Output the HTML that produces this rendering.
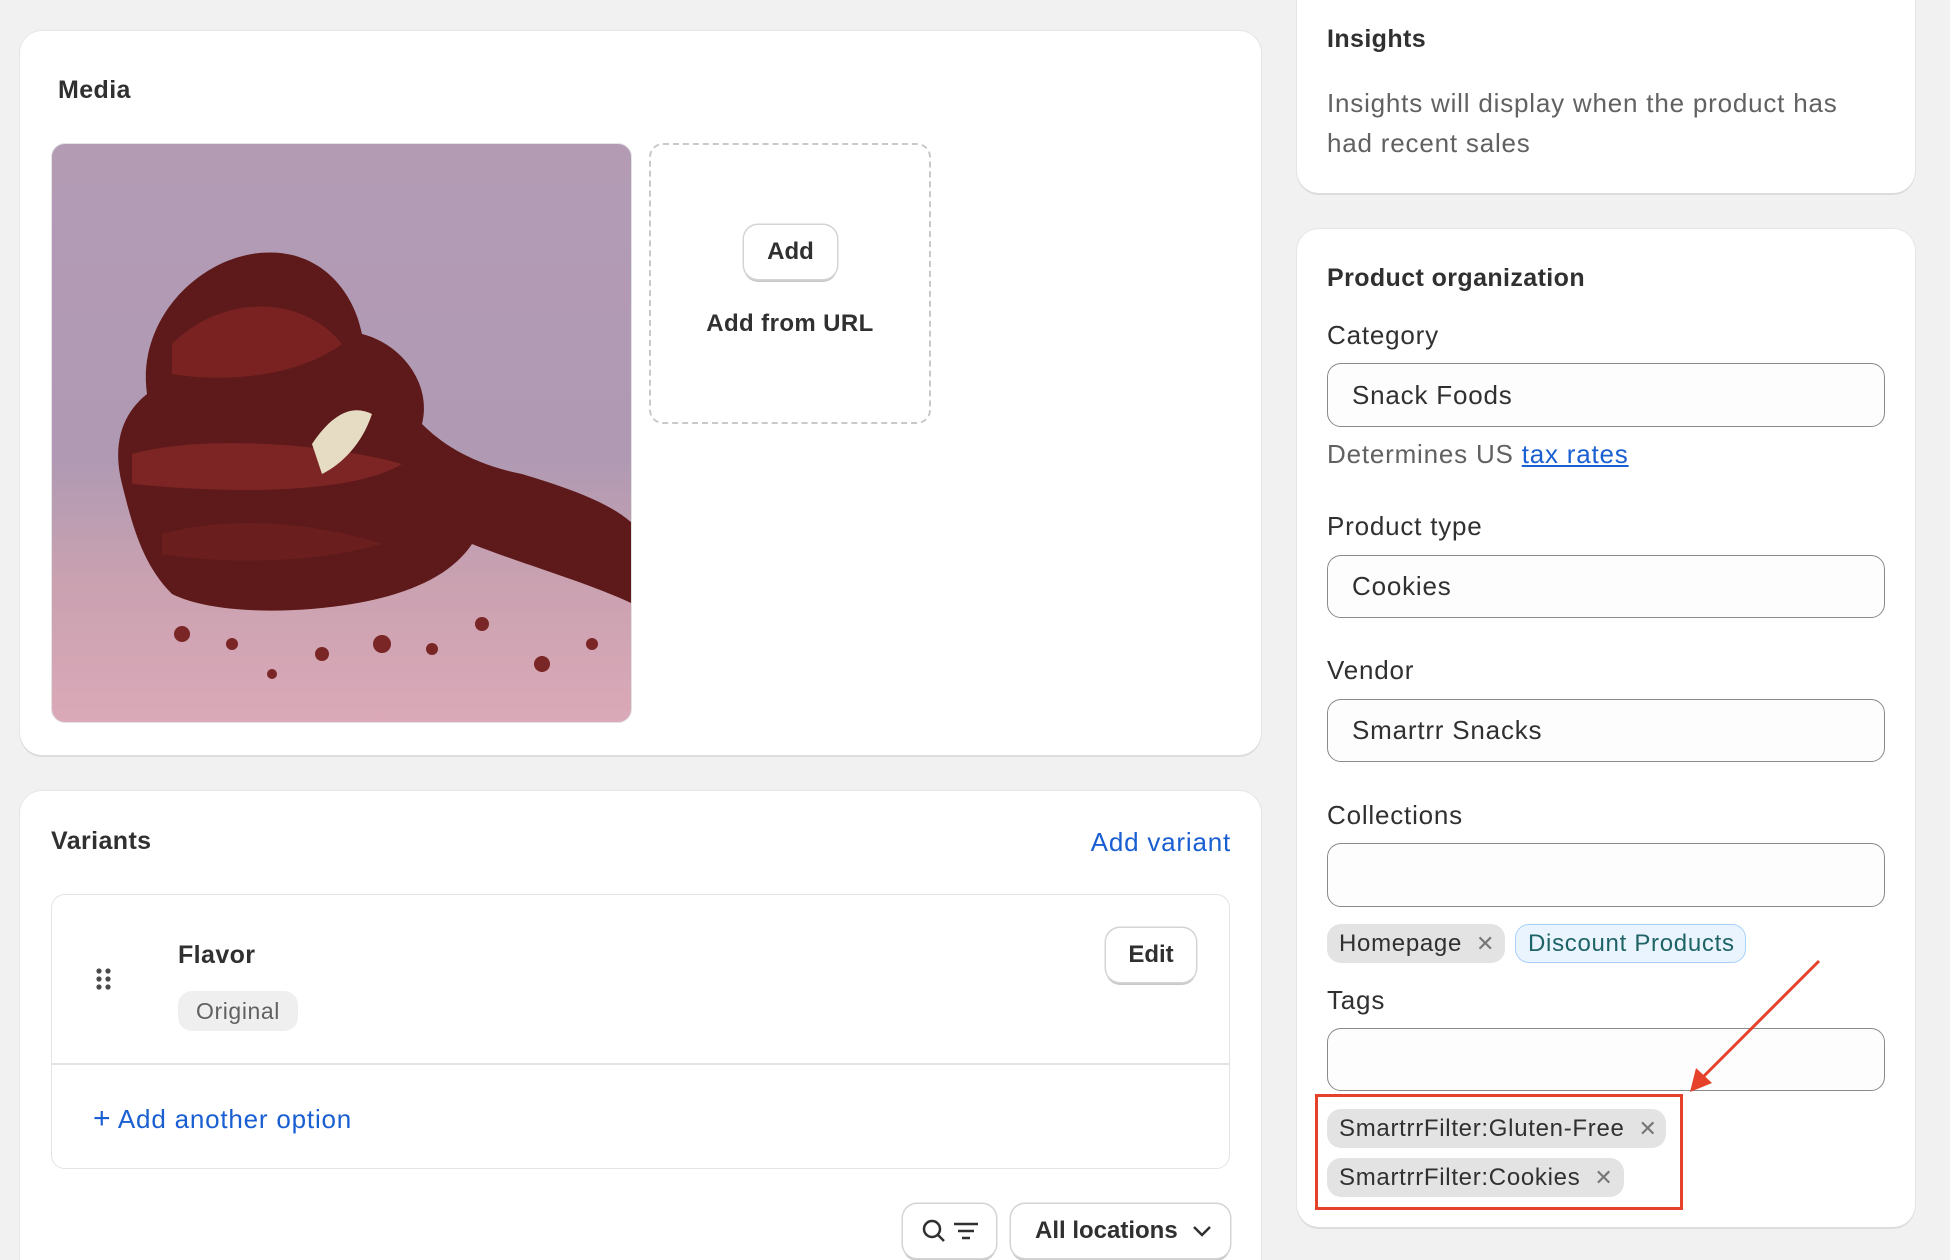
<!DOCTYPE html>
<html style="width:1950px;height:1260px;overflow:hidden"><head><meta charset="utf-8"><style>
*{box-sizing:border-box;margin:0;padding:0}
body{width:1950px;height:1260px;background:#f1f1f1;font-family:"Liberation Sans",sans-serif;color:#303030;position:relative;overflow:hidden}
.a{position:absolute}
.card{position:absolute;background:#fff;border-radius:22px;box-shadow:0 2px 0 #dcdcdc,0 0 0 1px #e6e6e6}
.t{position:absolute;font-size:26px;white-space:nowrap;line-height:1;letter-spacing:0.8px}
.b{font-weight:bold;letter-spacing:0.4px}
.inp{position:absolute;left:1327px;width:558px;border:1.5px solid #8a8a8a;border-radius:14px;background:#fdfdfd;font-size:26px;letter-spacing:0.8px;padding-left:24px;display:flex;align-items:center}
.chip{position:absolute;background:#e3e3e3;border-radius:14px;font-size:24px;letter-spacing:0.7px;display:flex;align-items:center;padding-left:12px;color:#303030;white-space:nowrap}
.chip .x{color:#777;margin-left:14px;font-size:22px}
.btn{position:absolute;background:#fff;border-radius:14px;box-shadow:0 0 0 1.5px #d4d4d4,0 3px 0 #c8c8c8;display:flex;align-items:center;justify-content:center;font-size:24px;font-weight:bold;color:#303030}
</style></head><body>

<div class="card" style="left:20px;top:31px;width:1241px;height:724px"></div>
<div class="t b" style="left:58px;top:78px;font-size:25px">Media</div>
<div class="a" style="left:51px;top:143px;width:581px;height:580px;border-radius:14px;overflow:hidden;border:1.5px solid #e3e3e3;background:linear-gradient(180deg,#b39bb4 0%,#b09ab3 55%,#c9a1b0 75%,#dba9b8 100%)">
<svg width="581" height="580" viewBox="0 0 581 580">
<path d="M95 250 C85 180 140 120 200 110 C260 100 300 140 310 190 C350 200 380 240 370 280 C390 300 420 320 470 330 C520 345 560 360 581 380 L581 460 C540 440 470 420 420 400 C400 430 360 450 300 460 C240 470 160 470 120 450 C90 420 80 380 70 340 C60 300 70 270 95 250Z" fill="#5e1a1a"/>
<path d="M120 200 C170 150 250 150 290 200 C250 230 180 240 120 230Z" fill="#7a2222"/>
<path d="M80 310 C150 290 280 300 350 320 C300 350 180 350 80 340Z" fill="#7d2424"/>
<path d="M260 300 C280 270 300 260 320 270 C310 300 290 320 270 330Z" fill="#e6dcc4"/>
<path d="M110 390 C180 370 270 380 330 400 C260 420 170 420 110 410Z" fill="#6b1e1e"/>
<g fill="#7a2626"><circle cx="130" cy="490" r="8"/><circle cx="180" cy="500" r="6"/><circle cx="270" cy="510" r="7"/><circle cx="330" cy="500" r="9"/><circle cx="380" cy="505" r="6"/><circle cx="430" cy="480" r="7"/><circle cx="490" cy="520" r="8"/><circle cx="220" cy="530" r="5"/><circle cx="540" cy="500" r="6"/></g>
</svg></div>
<div class="a" style="left:649px;top:143px;width:282px;height:281px;border:2px dashed #c9c9c9;border-radius:14px"></div>
<div class="btn" style="left:744px;top:225px;width:93px;height:54px">Add</div>
<div class="t b" style="left:649px;width:282px;text-align:center;top:312px;font-size:24px">Add from URL</div>

<div class="card" style="left:20px;top:791px;width:1241px;height:500px"></div>
<div class="t b" style="left:51px;top:829px;font-size:25px">Variants</div>
<div class="t" style="right:719px;top:829px;color:#1a5fd1">Add variant</div>
<div class="a" style="left:51px;top:894px;width:1179px;height:275px;border:1.5px solid #e3e3e3;border-radius:14px"></div>
<div class="a" style="left:52px;top:1063px;width:1177px;height:1.5px;background:#e3e3e3"></div>
<svg class="a" style="left:96px;top:968px" width="16" height="22"><g fill="#4a4a4a"><circle cx="3" cy="3" r="2.6"/><circle cx="12" cy="3" r="2.6"/><circle cx="3" cy="11" r="2.6"/><circle cx="12" cy="11" r="2.6"/><circle cx="3" cy="19" r="2.6"/><circle cx="12" cy="19" r="2.6"/></g></svg>
<div class="t b" style="left:178px;top:943px;font-size:25px">Flavor</div>
<div class="a" style="left:178px;top:991px;width:120px;height:40px;background:#efefef;border-radius:14px;font-size:23px;letter-spacing:0.6px;color:#616161;display:flex;align-items:center;justify-content:center">Original</div>
<div class="btn" style="left:1106px;top:928px;width:90px;height:54px">Edit</div>
<div class="t" style="left:93px;top:1104px;color:#1a5fd1"><span style="font-size:30px">+</span> Add another option</div>
<div class="btn" style="left:903px;top:1204px;width:93px;height:54px"><svg width="60" height="30" viewBox="0 0 60 30"><circle cx="12" cy="13" r="8" fill="none" stroke="#303030" stroke-width="2.5"/><path d="M18 19l6 6" stroke="#303030" stroke-width="2.5"/><path d="M34 8h24M38 15h16M42 22h8" stroke="#303030" stroke-width="2.5"/></svg></div>
<div class="btn" style="left:1011px;top:1204px;width:219px;height:54px;justify-content:flex-start;padding-left:24px">All locations <svg style="margin-left:14px" width="20" height="12" viewBox="0 0 20 12"><path d="M2 2l8 8 8-8" fill="none" stroke="#303030" stroke-width="2.5"/></svg></div>

<div class="card" style="left:1297px;top:-20px;width:618px;height:213px"></div>
<div class="t b" style="left:1327px;top:27px;font-size:25px">Insights</div>
<div class="t" style="left:1327px;top:90px;color:#616161">Insights will display when the product has</div>
<div class="t" style="left:1327px;top:130px;color:#616161">had recent sales</div>

<div class="card" style="left:1297px;top:229px;width:618px;height:998px"></div>
<div class="t b" style="left:1327px;top:266px;font-size:25px">Product organization</div>
<div class="t" style="left:1327px;top:322px">Category</div>
<div class="inp" style="top:363px;height:64px">Snack Foods</div>
<div class="t" style="left:1327px;top:441px;color:#616161">Determines US <span style="color:#1a5fd1;text-decoration:underline">tax rates</span></div>
<div class="t" style="left:1327px;top:513px">Product type</div>
<div class="inp" style="top:555px;height:63px">Cookies</div>
<div class="t" style="left:1327px;top:657px">Vendor</div>
<div class="inp" style="top:699px;height:63px">Smartrr Snacks</div>
<div class="t" style="left:1327px;top:802px">Collections</div>
<div class="inp" style="top:843px;height:64px"></div>
<div class="chip" style="left:1327px;top:924px;width:178px;height:39px">Homepage<span class="x">✕</span></div>
<div class="chip" style="left:1515px;top:924px;width:231px;height:39px;background:#eaf4ff;border:1.5px solid #a8d0f7;color:#1e6466">Discount Products</div>
<div class="t" style="left:1327px;top:987px">Tags</div>
<div class="inp" style="top:1028px;height:63px"></div>
<div class="a" style="left:1315px;top:1094px;width:368px;height:116px;border:3px solid #e5412b"></div>
<div class="chip" style="left:1327px;top:1109px;width:339px;height:39px">SmartrrFilter:Gluten-Free<span class="x">✕</span></div>
<div class="chip" style="left:1327px;top:1158px;width:297px;height:39px">SmartrrFilter:Cookies<span class="x">✕</span></div>
<svg class="a" style="left:0;top:0" width="1950" height="1260"><path d="M1819 961 L1700 1080" stroke="#e5412b" stroke-width="3"/><path d="M1690 1092 L1696 1068 L1712 1083Z" fill="#e5412b"/></svg>
</body></html>
